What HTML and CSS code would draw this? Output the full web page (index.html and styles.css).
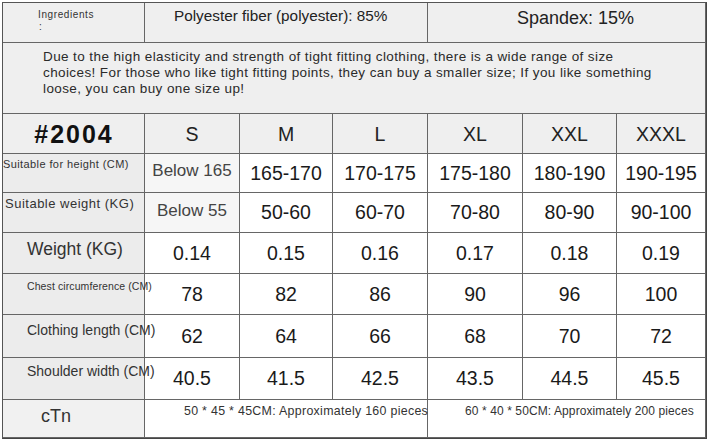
FILE: index.html
```html
<!DOCTYPE html>
<html lang="en">
<head>
<meta charset="utf-8">
<title>Size chart #2004</title>
<link rel="stylesheet" href="styles.css">
</head>
<body>
<div class="chart">
  <div class="cell top ingr"><div class="ingr-t">Ingredients</div><div class="ingr-c">:</div></div>
  <div class="cell top span3 poly">Polyester fiber (polyester): 85%</div>
  <div class="cell top span3 spx">Spandex: 15%</div>

  <div class="cell desc">Due to the high elasticity and strength of tight fitting clothing, there is a wide range of size<br>choices! For those who like tight fitting points, they can buy a smaller size; If you like something<br>loose, you can buy one size up!</div>

  <div class="cell head code">#2004</div>
  <div class="cell head">S</div>
  <div class="cell head">M</div>
  <div class="cell head">L</div>
  <div class="cell head">XL</div>
  <div class="cell head">XXL</div>
  <div class="cell head last">XXXL</div>

  <div class="cell lbl lbl-h">Suitable for height (CM)</div>
  <div class="cell num below">Below 165</div>
  <div class="cell num">165-170</div>
  <div class="cell num">170-175</div>
  <div class="cell num">175-180</div>
  <div class="cell num">180-190</div>
  <div class="cell num last">190-195</div>

  <div class="cell lbl lbl-w">Suitable weight (KG)</div>
  <div class="cell num below">Below 55</div>
  <div class="cell num">50-60</div>
  <div class="cell num">60-70</div>
  <div class="cell num">70-80</div>
  <div class="cell num">80-90</div>
  <div class="cell num last">90-100</div>

  <div class="cell lbl lbl-kg">Weight (KG)</div>
  <div class="cell num">0.14</div>
  <div class="cell num">0.15</div>
  <div class="cell num">0.16</div>
  <div class="cell num">0.17</div>
  <div class="cell num">0.18</div>
  <div class="cell num last">0.19</div>

  <div class="cell lbl lbl-chest">Chest circumference (CM)</div>
  <div class="cell num">78</div>
  <div class="cell num">82</div>
  <div class="cell num">86</div>
  <div class="cell num">90</div>
  <div class="cell num">96</div>
  <div class="cell num last">100</div>

  <div class="cell lbl lbl-len">Clothing length (CM)</div>
  <div class="cell num">62</div>
  <div class="cell num">64</div>
  <div class="cell num">66</div>
  <div class="cell num">68</div>
  <div class="cell num">70</div>
  <div class="cell num last">72</div>

  <div class="cell lbl lbl-sh">Shoulder width (CM)</div>
  <div class="cell num">40.5</div>
  <div class="cell num">41.5</div>
  <div class="cell num">42.5</div>
  <div class="cell num">43.5</div>
  <div class="cell num">44.5</div>
  <div class="cell num last">45.5</div>

  <div class="cell lbl lbl-ctn">cTn</div>
  <div class="cell span3 ctn ctn1">50 * 45 * 45CM: Approximately 160 pieces</div>
  <div class="cell span3 ctn ctn2">60 * 40 * 50CM: Approximately 200 pieces</div>
</div>
</body>
</html>
```

FILE: styles.css
```css
html, body {
  margin: 0;
  padding: 0;
  background: #ffffff;
}

body {
  font-family: "Liberation Sans", Arial, sans-serif;
  color: #222222;
}

.chart {
  margin: 2px 0 0 2px;
  width: 703px;
  display: grid;
  grid-template-columns: 142px 95px 93px 95px 95px 94px 89px;
  grid-template-rows: 40px 71px 40px 39px 40px 41px 41px 43px 42px 38px;
  border-left: 1px solid #555555;
  border-top: 1px solid #555555;
  border-right: 1px solid #444444;
  border-bottom: 1px solid #444444;
}

.cell {
  border-right: 1px solid #666666;
  border-bottom: 1px solid #666666;
  min-width: 0;
  white-space: nowrap;
}

.span3 {
  grid-column: span 3;
}

.top {
  background: #efefef;
}

.ingr {
  padding: 5px 0 0 35px;
  font-size: 10px;
  letter-spacing: 0.6px;
  color: #333333;
}

.ingr-t {
  line-height: 14px;
}

.ingr-c {
  line-height: 10px;
  padding-left: 1px;
}

.poly {
  font-size: 15.3px;
  padding: 3px 0 0 29px;
  line-height: 20px;
  color: #222222;
}

.spx {
  font-size: 18px;
  padding: 4px 0 0 89px;
  line-height: 22px;
  color: #222222;
}

.desc {
  grid-column: span 7;
  background: #efefef;
  font-size: 13.5px;
  letter-spacing: 0.4px;
  line-height: 16px;
  padding: 6px 0 0 40px;
  color: #2a2a2a;
}

.head {
  background: #efefef;
  display: flex;
  align-items: center;
  justify-content: center;
  font-size: 19.5px;
  color: #222222;
  padding-top: 1px;
}

.code {
  font-weight: 900;
  font-size: 25px;
  letter-spacing: 2px;
  color: #111111;
  padding-left: 1px;
}

.num {
  display: flex;
  align-items: center;
  justify-content: center;
  font-size: 19.5px;
  color: #1a1a1a;
  background: #ffffff;
}

.below {
  background: #f6f6f6;
  font-size: 17px;
  color: #444444;
  padding-bottom: 4px;
}

.lbl {
  background: #ececec;
  color: #333333;
  z-index: 1;
}

.lbl-h {
  font-size: 11px;
  letter-spacing: 0.4px;
  padding: 4px 0 0 0;
}

.lbl-w {
  font-size: 13px;
  letter-spacing: 0.5px;
  padding: 3px 0 0 2px;
}

.lbl-kg {
  font-size: 17.5px;
  padding: 6px 0 0 24px;
}

.lbl-chest {
  font-size: 10.5px;
  letter-spacing: 0.1px;
  padding: 6px 0 0 24px;
}

.lbl-len {
  font-size: 14px;
  padding: 7px 0 0 24px;
}

.lbl-sh {
  font-size: 14px;
  padding: 5px 0 0 24px;
}

.lbl-ctn {
  font-size: 18px;
  padding: 6px 0 0 38px;
  background: #f1f1f1;
}

.ctn {
  background: #ffffff;
  color: #333333;
  font-size: 12.4px;
  letter-spacing: 0.3px;
  line-height: 16px;
  padding-top: 3px;
}

.ctn1 {
  padding-left: 39px;
}

.ctn2 {
  padding-left: 37px;
  font-size: 12px;
  letter-spacing: 0.1px;
}
```
